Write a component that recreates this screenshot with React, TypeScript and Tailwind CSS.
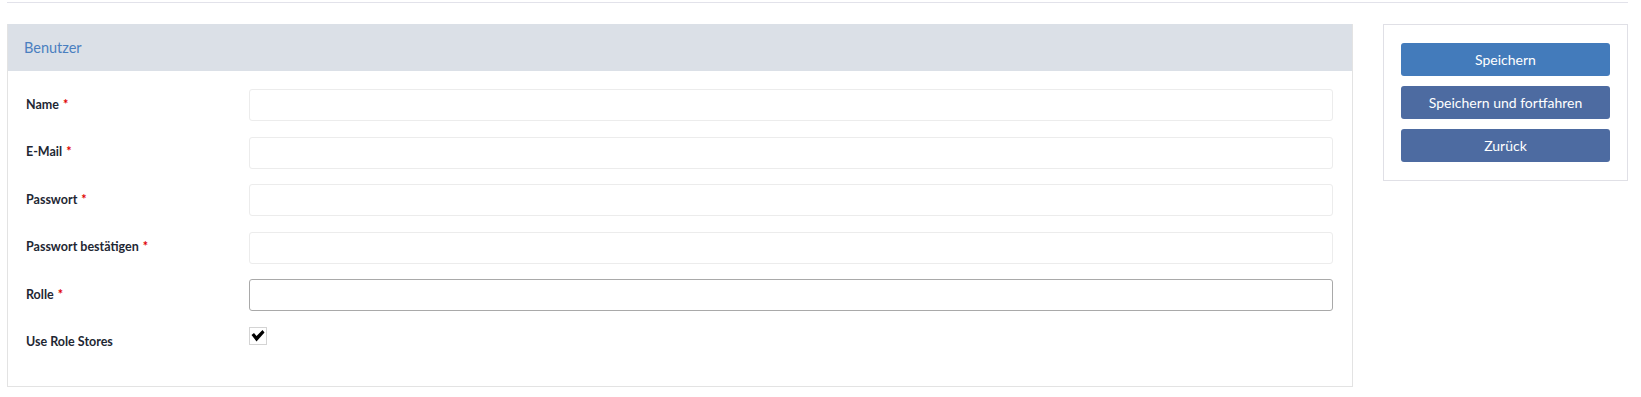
import React from "react";

const fields = [
  { label: "Name", required: true },
  { label: "E-Mail", required: true },
  { label: "Passwort", required: true },
  { label: "Passwort bestätigen", required: true },
];

const Label: React.FC<{ text: string; required?: boolean }> = ({ text, required }) => (
  <label className="block w-[223px] shrink-0 text-[12.5px] font-bold text-[#1e2733]">
    {text}
    {required && <span className="ml-[4px] text-[#e00000]">*</span>}
  </label>
);

const App: React.FC = () => {
  return (
    <div className="min-h-[397px] bg-white pl-[7px] pr-[13px] font-['Lato','Liberation_Sans',sans-serif]">
      <div className="mt-[2px] border-t border-[#e2e2ea]" />

      <div className="mt-[21px] flex items-start gap-[30px]">
        {/* form panel */}
        <div className="w-[1346px] border border-t-0 border-[#e3e3e3]">
          <div className="flex h-[47px] items-center bg-[#dbe0e7] px-[16px] text-[14.5px] text-[#4a7fc0]">
            Benutzer
          </div>

          <div className="flex flex-col gap-[15.5px] pb-[27px] pl-[18px] pr-[19px] pt-[18px]">
            {fields.map((f) => (
              <div key={f.label} className="flex items-center">
                <Label text={f.label} required={f.required} />
                <input
                  type="text"
                  className="h-[32px] flex-1 rounded-[3px] border border-[#ececec] bg-white px-2 text-[13px] outline-none"
                />
              </div>
            ))}

            <div className="flex items-center">
              <Label text="Rolle" required />
              <select className="h-[32px] flex-1 appearance-none rounded-[3px] border border-[#a9a9a9] bg-white px-2 text-[13px] outline-none" />
            </div>

            <div className="flex h-[32px] items-start">
              <div className="pt-[6px]">
                <Label text="Use Role Stores" />
              </div>
              <div className="flex h-[18px] w-[18px] items-center justify-center border border-[#d4d4d4] bg-white">
                <svg width="14" height="12" viewBox="0 0 14 12">
                  <path d="M0.5 5 L3 3 L5.5 6 L11.5 0 L13.5 2.5 L5.5 11.5 Z" fill="#000" />
                </svg>
              </div>
            </div>
          </div>
        </div>

        {/* action panel */}
        <div className="flex w-[245px] flex-col gap-[10px] border border-[#e0e0e6] px-[17px] py-[18px]">
          <button className="h-[33px] rounded-[3px] bg-[#437bbb] text-[14px] text-white">
            Speichern
          </button>
          <button className="h-[33px] rounded-[3px] bg-[#4d6ba1] text-[14px] text-white">
            Speichern und fortfahren
          </button>
          <button className="h-[33px] rounded-[3px] bg-[#4d6ba1] text-[14px] text-white">
            Zurück
          </button>
        </div>
      </div>
    </div>
  );
};

export default App;
